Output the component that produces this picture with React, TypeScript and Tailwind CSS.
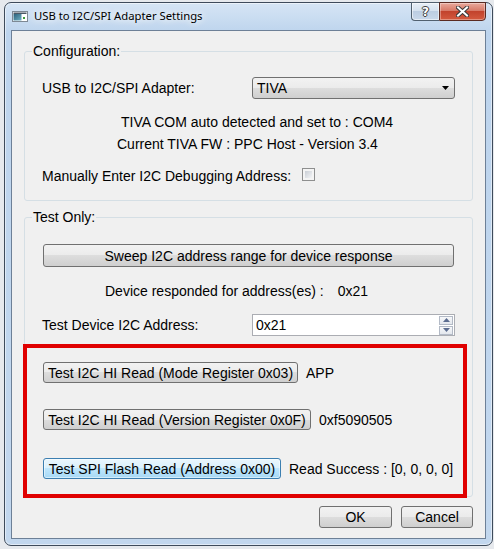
import React from "react";

const btn =
  "box-border rounded-[3px] border border-[#707070] bg-[linear-gradient(#f2f2f2,#ebebeb_50%,#dddddd_50%,#cfcfcf)] text-[14px] leading-[16px] text-black whitespace-nowrap flex items-center justify-center";
const btnFocus =
  "box-border rounded-[3px] border border-[#3c7fb1] bg-[linear-gradient(#eaf6fd,#d9f0fc_50%,#bee6fd_50%,#a7d9f5)] text-[14px] leading-[16px] text-black whitespace-nowrap flex items-center justify-center shadow-[inset_0_0_0_1px_rgba(255,255,255,0.5)]";
const txt = "text-[14px] leading-[16px] text-black whitespace-nowrap";

function TitleBar() {
  return (
    <div className="h-[27px] flex items-start">
      <div className="h-[26px] flex items-center">
        <svg width="16" height="11" viewBox="0 0 16 11" className="ml-[1px] mt-[1px]">
          <defs>
            <linearGradient id="ig" x1="0" y1="0" x2="1" y2="1">
              <stop offset="0" stopColor="#2a5f7a" />
              <stop offset="1" stopColor="#6fb0c4" />
            </linearGradient>
          </defs>
          <rect x="0.5" y="0.5" width="15" height="10" fill="#ffffff" stroke="#7d8894" />
          <rect x="1.5" y="1.5" width="13" height="1.5" fill="#4a5866" />
          <rect x="1.5" y="3" width="8" height="6.5" fill="url(#ig)" />
          <rect x="11" y="6" width="2" height="2" fill="#3c9a3c" />
        </svg>
        <span className="ml-[6px] font-['Noto_Sans',sans-serif] text-[11.3px] leading-[16px] text-black [text-shadow:0_0_6px_#ffffff,0_0_10px_#ffffff]">
          USB to I2C/SPI Adapter Settings
        </span>
      </div>
      <div className="ml-auto flex -mt-[1px]">
        <div className="w-[28px] h-[19px] rounded-bl-[4px] border border-[#51606f] border-r-0 bg-[linear-gradient(#e8eff7,#d3e0ee_50%,#bccde2_50%,#c9d8ea)] flex items-center justify-center shadow-[inset_0_0_0_1px_rgba(255,255,255,0.55)]">
          <span className="font-['DejaVu_Sans',sans-serif] font-bold text-[12px] leading-[12px] text-white [text-shadow:0_0_1px_#333,1px_0_0_#444,-1px_0_0_#444,0_1px_0_#444,0_-1px_0_#444]">
            ?
          </span>
        </div>
        <div className="w-[47px] h-[19px] rounded-br-[4px] border border-[#5a2a22] bg-[linear-gradient(#e9a99c,#d77a68_45%,#c2432d_50%,#d45a3f)] flex items-center justify-center shadow-[inset_0_0_0_1px_rgba(255,255,255,0.35)]">
          <svg width="13" height="11" viewBox="0 0 13 11">
            <path d="M2 1.5 L11 9.5 M11 1.5 L2 9.5" stroke="#3a3a3a" strokeWidth="4" strokeLinecap="square" />
            <path d="M2 1.5 L11 9.5 M11 1.5 L2 9.5" stroke="#ffffff" strokeWidth="2" strokeLinecap="square" />
          </svg>
        </div>
      </div>
    </div>
  );
}

function Spinner() {
  return (
    <div className="box-border w-[203px] h-[22px] border border-[#abadb3] bg-white flex items-center">
      <span className={txt + " pl-[3px] flex-1"}>0x21</span>
      <div className="mr-[1px] flex flex-col gap-[1px]">
        <div className="box-border w-[14px] h-[9px] border border-[#b3bac6] bg-[linear-gradient(#f7f8fa,#e3e7ed)] flex items-center justify-center">
          <svg width="7" height="4" viewBox="0 0 7 4">
            <path d="M0 4 L3.5 0 L7 4 Z" fill="#5b6c8f" />
          </svg>
        </div>
        <div className="box-border w-[14px] h-[9px] border border-[#b3bac6] bg-[linear-gradient(#f7f8fa,#e3e7ed)] flex items-center justify-center">
          <svg width="7" height="4" viewBox="0 0 7 4">
            <path d="M0 0 L3.5 4 L7 0 Z" fill="#5b6c8f" />
          </svg>
        </div>
      </div>
    </div>
  );
}

export default function App() {
  return (
    <div className="w-[494px] h-[549px] bg-[#e6e9ed] pt-[2px] pl-[4px] overflow-hidden font-['Liberation_Sans',Arial,sans-serif]">
      <div className="box-border w-[489px] h-[544px] rounded-[7px] border border-[#3e4b5b] bg-[linear-gradient(180deg,#d6e5f5_0%,#bdd4ed_30px,#c2d7ee_100%)] flex flex-col px-[6px] pb-[6px] shadow-[inset_0_0_0_1px_rgba(255,255,255,0.5)]">
        <TitleBar />
        <div className="flex-1 border border-[#6d8097] bg-[#f0f0f0] flex flex-col px-[12px]">
          <fieldset className="mt-[12px] rounded-[3px] border border-[#d5dfe5] pb-[16px]">
            <legend className={txt + " ml-[7px] px-[1px]"}>Configuration:</legend>
            <div className="mt-[18px] flex items-center pl-[17px]">
              <span className={txt + " w-[210px]"}>USB to I2C/SPI Adapter:</span>
              <div className={btn + " w-[203px] h-[22px] !justify-between pl-[4px] pr-[5px]"}>
                <span>TIVA</span>
                <svg width="7" height="4" viewBox="0 0 7 4">
                  <path d="M0 0 L7 0 L3.5 4 Z" fill="#000000" />
                </svg>
              </div>
            </div>
            <div className={txt + " mt-[15px] pl-[96px]"}>TIVA COM auto detected and set to : COM4</div>
            <div className={txt + " mt-[6px] pl-[92px]"}>Current TIVA FW : PPC Host - Version 3.4</div>
            <div className="mt-[16px] h-[16px] flex items-center pl-[17px]">
              <span className={txt}>Manually Enter I2C Debugging Address:</span>
              <span className="box-border ml-[11px] mb-[3px] w-[13px] h-[13px] border border-[#8e8f8f] bg-[#f4f4f4] p-[2px] flex">
                <span className="flex-1 bg-[linear-gradient(135deg,#c9ced5,#f3f4f6)]" />
              </span>
            </div>
          </fieldset>

          <fieldset className="mt-[8px] rounded-[3px] border border-[#d5dfe5]">
            <legend className={txt + " ml-[7px] px-[1px]"}>Test Only:</legend>
            <div className="mt-[19px] px-[18px]">
              <div className={btn + " w-full h-[23px]"}>Sweep I2C address range for device response</div>
            </div>
            <div className="mt-[16px] flex pl-[80px]">
              <span className={txt}>Device responded for address(es) :</span>
              <span className={txt + " ml-[14px]"}>0x21</span>
            </div>
            <div className="mt-[15px] flex items-center pl-[17px]">
              <span className={txt + " w-[210px]"}>Test Device I2C Address:</span>
              <Spinner />
            </div>
            <div className="relative box-border mt-[8px] -ml-[2px] mb-[-2px] w-[444px] border-[4px] border-[#e00000] pl-[16px] pt-[14px] pb-[15px] flex flex-col">
              <div className="flex items-center">
                <div className={btn + " w-[255px] h-[21px]"}>Test I2C HI Read (Mode Register 0x03)</div>
                <span className={txt + " ml-[8px]"}>APP</span>
              </div>
              <div className="mt-[26px] flex items-center">
                <div className={btn + " w-[268px] h-[21px]"}>Test I2C HI Read (Version Register 0x0F)</div>
                <span className={txt + " ml-[8px]"}>0xf5090505</span>
              </div>
              <div className="mt-[28px] flex items-center">
                <div className={btnFocus + " w-[238px] h-[21px]"}>Test SPI Flash Read (Address 0x00)</div>
                <span className={txt + " ml-[8px]"}>Read Success : [0, 0, 0, 0]</span>
              </div>
            </div>
          </fieldset>

          <div className="mt-[9px] flex justify-end gap-[9px]">
            <div className={btn + " w-[73px] h-[22px]"}>OK</div>
            <div className={btn + " w-[72px] h-[22px]"}>Cancel</div>
          </div>
        </div>
      </div>
    </div>
  );
}
